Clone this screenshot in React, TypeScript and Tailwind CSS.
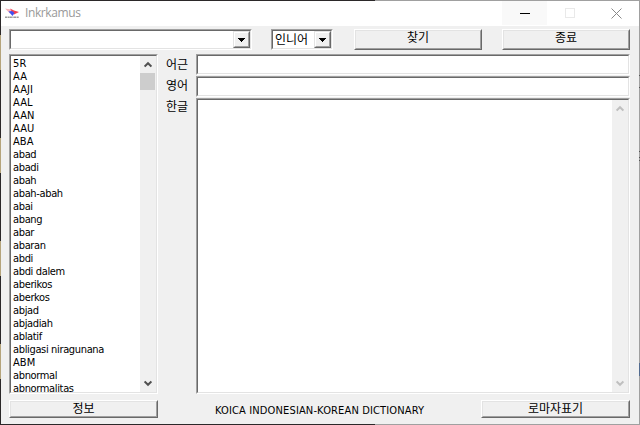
import type { ReactNode } from "react";

const words = [
  "5R", "AA", "AAJI", "AAL", "AAN", "AAU", "ABA", "abad", "abadi", "abah",
  "abah-abah", "abai", "abang", "abar", "abaran", "abdi", "abdi dalem",
  "aberikos", "aberkos", "abjad", "abjadiah", "ablatif",
  "abligasi niragunana", "ABM", "abnormal", "abnormalitas",
];

function Sunken({ className = "", children }: { className?: string; children?: ReactNode }) {
  return (
    <div className={`border border-t-[#a0a0a0] border-l-[#a0a0a0] border-r-white border-b-white ${className}`}>
      <div className="flex h-full w-full overflow-hidden border border-t-[#696969] border-l-[#696969] border-r-[#e3e3e3] border-b-[#e3e3e3] bg-white">
        {children}
      </div>
    </div>
  );
}

function Button({ className = "", children }: { className?: string; children: ReactNode }) {
  return (
    <button className={`block border border-t-white border-l-white border-r-[#696969] border-b-[#696969] ${className}`}>
      <span className="flex h-full w-full justify-center border border-t-[#e3e3e3] border-l-[#e3e3e3] border-r-[#a0a0a0] border-b-[#a0a0a0] bg-[#f0f0f0] font-['Noto_Sans_CJK_KR',sans-serif] text-[12px] leading-[12px]">
        {children}
      </span>
    </button>
  );
}

function Combo({ className = "", children }: { className?: string; children?: ReactNode }) {
  return (
    <Sunken className={className}>
      <div className="flex-1 overflow-hidden whitespace-nowrap pl-[2px] font-['Noto_Sans_CJK_KR',sans-serif] text-[12px] leading-[15px]">{children}</div>
      <div className="h-[17px] w-[17px] shrink-0 border border-t-[#e3e3e3] border-l-[#e3e3e3] border-r-[#696969] border-b-[#696969]">
        <div className="flex h-full w-full items-center justify-center border border-t-white border-l-white border-r-[#a0a0a0] border-b-[#a0a0a0] bg-[#f0f0f0]">
          <svg width="7" height="4" viewBox="0 0 7 4" shapeRendering="crispEdges">
            <path d="M0 0h7v1h-1v1h-1v1h-1v1h-1v-1h-1v-1h-1v-1h-1z" fill="#000" />
          </svg>
        </div>
      </div>
    </Sunken>
  );
}

function Arrow({ down = false, color }: { down?: boolean; color: string }) {
  return (
    <svg width="8" height="7" viewBox="0 0 8 7" className={down ? "rotate-180" : ""}>
      <path d="M0.6 5.6L4 2.2L7.4 5.6" fill="none" stroke={color} strokeWidth="2" />
    </svg>
  );
}

function Scrollbar({ thumb = false, color }: { thumb?: boolean; color: string }) {
  return (
    <div className="flex w-4 shrink-0 flex-col items-center bg-[#f0f0f0]">
      <div className="flex h-[17px] items-center pr-px"><Arrow color={color} /></div>
      <div className="flex w-full flex-1 flex-col">
        {thumb && <div className="h-[17px] w-[15px] bg-[#cdcdcd]" />}
      </div>
      <div className="flex h-[17px] items-center pr-px"><Arrow down color={color} /></div>
    </div>
  );
}

function AppLogo() {
  return (
    <svg width="14" height="11" viewBox="0 0 14 11">
      <path d="M0 0.5L6 1.5L8 4L5 5.5Z" fill="#f6b3ba" />
      <path d="M5 0.5L9 2.5L14 4L9 6.5L7 4Z" fill="#f34050" />
      <path d="M3.5 3.5L7 3L9.5 5L7.5 8Z" fill="#4050f0" />
      <path d="M0 9.2H14" stroke="#9a9a9a" strokeWidth="1.4" strokeDasharray="2.4 .5 1.3 .3" />
    </svg>
  );
}

function Label({ children }: { children: ReactNode }) {
  return <div className="h-[21px] font-['Noto_Sans_CJK_KR',sans-serif] text-[12px] leading-[20px]">{children}</div>;
}

export default function App() {
  return (
    <div className="flex h-[425px] w-[640px] flex-col overflow-hidden bg-[#f0f0f0] font-['DejaVu_Sans_Condensed','DejaVu_Sans',sans-serif] text-[11px] text-black">
      <div className="flex h-px shrink-0"><div className="w-[375px] bg-[#2b2829]" /><div className="flex-1 bg-[#a0a0a0]" /></div>

      <div className="flex h-[423px]">
        <div className="flex w-px shrink-0 flex-col bg-[#2b2829]">
          <div className="mt-[34px] h-[35px] bg-[#b5a47b]" />
          <div className="mt-[68px] h-[35px] bg-[#b5a47b]" />
          <div className="mt-[68px] h-[35px] bg-[#b5a47b]" />
          <div className="mt-[68px] h-[35px] bg-[#b5a47b]" />
        </div>

        <div className="flex w-[638px] flex-col">
          <header className="flex h-[25px] shrink-0 bg-white">
            <div className="pt-[7px] pl-1"><AppLogo /></div>
            <div className="ml-[6px] flex-1 font-['Open_Sans','Noto_Sans',sans-serif] text-[12px] leading-[24px] tracking-[-0.4px] text-[#999]">Inkrkamus</div>
            <div className="flex h-6 w-[45px] items-center justify-center bg-[#f9f9f9]"><div className="h-px w-[10px] bg-black" /></div>
            <div className="flex h-6 w-[46px] items-center justify-center"><div className="h-[10px] w-[10px] border border-[#e9e9e9]" /></div>
            <div className="flex h-6 w-[46px] items-center justify-center">
              <svg width="11" height="11" viewBox="0 0 11 11"><path d="M.5 .5L10.5 10.5M10.5 .5L.5 10.5" stroke="#888" strokeWidth="1" /></svg>
            </div>
          </header>

          <div className="flex h-[28px] shrink-0 pt-[3px] pl-2">
            <Combo className="h-[21px] w-[243px]" />
            <Combo className="ml-[19px] h-[21px] w-[62px]">인니어</Combo>
            <Button className="ml-[21px] h-[21px] w-[128px]">찾기</Button>
            <Button className="ml-[20px] h-[21px] w-[128px]">종료</Button>
          </div>

          <div className="flex h-[340px] shrink-0 pl-2">
            <Sunken className="h-[340px] w-[149px]">
              <ul className="flex-1 overflow-hidden pl-[2px]">
                {words.map((word) => (
                  <li
                    key={word}
                    className={`h-[13px] whitespace-nowrap leading-[15px] ${word === word.toUpperCase() ? "tracking-[0.1px]" : "tracking-[-0.35px]"}`}
                  >
                    {word}
                  </li>
                ))}
              </ul>
              <Scrollbar thumb color="#505050" />
            </Sunken>
            <div className="w-[38px] pl-2">
              <Label>어근</Label>
              <Label>영어</Label>
              <Label>한글</Label>
            </div>
            <div className="flex w-[434px] flex-col gap-px">
              <Sunken className="h-[21px]" />
              <Sunken className="h-[21px]" />
              <Sunken className="h-[296px]">
                <div className="flex-1" />
                <Scrollbar color="#bfbfbf" />
              </Sunken>
            </div>
          </div>

          <footer className="flex flex-1 pt-[6px] pl-2">
            <Button className="h-[18px] w-[149px]">정보</Button>
            <div className="ml-[57px] w-[266px] whitespace-nowrap pt-[4px] leading-[13px] tracking-[0.14px]">KOICA INDONESIAN-KOREAN DICTIONARY</div>
            <Button className="h-[18px] w-[149px]">로마자표기</Button>
          </footer>
        </div>

        <div className="flex w-px shrink-0 flex-col bg-[#a0a0a0]">
          <div className="mt-[74px] h-px bg-[#555]" />
          <div className="mt-[11px] h-px bg-[#555]" />
          <div className="mt-[63px] h-px bg-[#555]" />
          <div className="mt-[5px] h-px bg-[#555]" />
          <div className="mt-[2px] h-px bg-[#555]" />
          <div className="mt-[202px] h-[13px] bg-[#526b8f]" />
        </div>
      </div>

      <div className="flex h-px shrink-0"><div className="w-[375px] bg-[#2b2829]" /><div className="flex-1 bg-[#a0a0a0]" /></div>
    </div>
  );
}
